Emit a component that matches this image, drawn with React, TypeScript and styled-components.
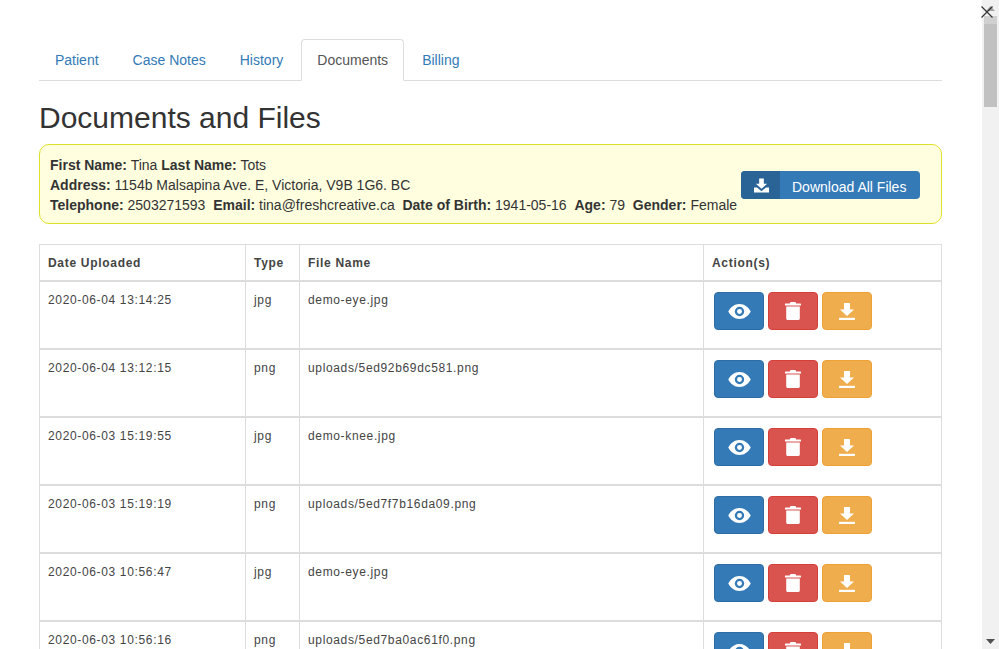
import React from 'react'
import styled, { createGlobalStyle } from 'styled-components'

const GlobalStyle = createGlobalStyle`
  html, body {
    margin: 0;
    height: 100%;
    overflow: hidden;
    background: #fff;
    font-family: "Liberation Sans", Arial, sans-serif;
    font-size: 14px;
    line-height: 20px;
    color: #333;
  }
  * { box-sizing: border-box; }
`

/*-- styled-component --*/
const Shell = styled.div`
  position: relative;
  display: flex;
  width: 999px;
  height: 649px;
  overflow: hidden;
`
const Content = styled.main`
  flex: 1;
  min-width: 0;
  padding: 39px 40px 0 39px;
  overflow: hidden;
`
const Tabs = styled.ul`
  display: flex;
  list-style: none;
  margin: 0;
  padding: 0;
  border-bottom: 1px solid #ddd;
`
const Tab = styled.li<{ $active?: boolean }>`
  margin: 0 2px -1px 0;
  padding: 10px 15px;
  height: 42px;
  border: 1px solid ${(p) => (p.$active ? '#ddd' : 'transparent')};
  border-bottom-color: ${(p) => (p.$active ? '#fff' : 'transparent')};
  border-radius: 4px 4px 0 0;
  background: ${(p) => (p.$active ? '#fff' : 'transparent')};
  color: ${(p) => (p.$active ? '#555' : '#337ab7')};
`
const Title = styled.h1`
  margin: 20px 0 10px;
  font-size: 30px;
  font-weight: 400;
  line-height: 33px;
  color: #333;
`
const InfoBox = styled.section`
  display: flex;
  align-items: flex-start;
  justify-content: space-between;
  height: 80px;
  margin-bottom: 20px;
  padding: 10px 21px 0 10px;
  background: #ffffdf;
  border: 1px solid #e0e02a;
  border-radius: 10px;
`
const InfoLine = styled.div`
  white-space: nowrap;
  b { font-weight: 700; }
`
const DownloadAll = styled.button`
  display: flex;
  align-items: stretch;
  width: 179px;
  height: 28px;
  margin-top: 16px;
  padding: 0;
  overflow: hidden;
  background: #337ab7;
  border: 0;
  border-radius: 4px;
  color: #fff;
  font: inherit;
`
const DownloadAllIcon = styled.span`
  display: flex;
  align-items: center;
  justify-content: center;
  width: 39px;
  padding-left: 2px;
  background: #2a6496;
`
const DownloadAllLabel = styled.span`
  flex: 1;
  padding-left: 12px;
  line-height: 32px;
  text-align: left;
`
const Table = styled.table`
  width: 902px;
  border-collapse: collapse;
  table-layout: fixed;
  font-size: 12px;
  letter-spacing: 0.65px;
  color: #444;
  border: 1px solid #ddd;
`
const HeadCell = styled.th`
  padding: 8px 8px 7px;
  border: 1px solid #ddd;
  border-bottom: 2px solid #ddd;
  font-weight: 700;
  letter-spacing: 0.7px;
  text-align: left;
`
const Cell = styled.td`
  height: 68px;
  padding: 8px;
  border: 1px solid #ddd;
  border-bottom-width: 2px;
  vertical-align: top;
`
const Actions = styled.div`
  display: flex;
  gap: 4px;
  margin: 2px 0 0 2px;
`
const ActionButton = styled.button<{ $bg: string; $edge: string }>`
  display: flex;
  align-items: center;
  justify-content: center;
  width: 50px;
  height: 38px;
  padding: 0;
  background: ${(p) => p.$bg};
  border: 1px solid ${(p) => p.$edge};
  border-radius: 4px;
`
const ScrollBar = styled.aside`
  display: flex;
  flex-direction: column;
  align-items: center;
  width: 17px;
  flex: none;
  background: #f1f1f1;
`
const ArrowSlot = styled.div`
  display: flex;
  align-items: center;
  justify-content: center;
  height: 16px;
  flex: none;
`
const Thumb = styled.div`
  width: 13px;
  height: 91px;
  background: linear-gradient(#d0d0d0 0 8px, #c1c1c1 8px);
`
const Spacer = styled.div`
  flex: 1;
`
const CloseButton = styled.button`
  position: absolute;
  top: 6px;
  left: 981px;
  display: flex;
  width: 12px;
  height: 12px;
  padding: 0;
  background: none;
  border: 0;
`

/*-- icons --*/
const DownloadTrayIcon: React.FC = () => (
  <svg width="15" height="15" viewBox="0 0 16 15" fill="#fff">
    <path d="M5.500 0h5v5.500H14L8 11 2 5.500h3.500z" />
    <path d="M0 9.500h3.200L8 13.500l4.800-4H16V15H0z" />
  </svg>
)
const EyeIcon: React.FC = () => (
  <svg width="23" height="15" viewBox="0 0 24 16">
    <path fill="#fff" fillRule="evenodd" d="M12 0c5.400 0 9.600 3.400 12 8-2.400 4.600-6.600 8-12 8S2.400 12.600 0 8c2.400-4.600 6.600-8 12-8zm0 3a5 5 0 1 0 0 10 5 5 0 0 0 0-10z" />
    <circle cx="12" cy="8" r="2.600" fill="#fff" />
  </svg>
)
const TrashIcon: React.FC = () => (
  <svg width="16" height="18" viewBox="0 0 16 18" fill="#fff">
    <path d="M5.500 0h5l.7 1.400h4.300a.5.5 0 0 1 .5.500V3.500H0V1.900a.5.5 0 0 1 .5-.5h4.300z" />
    <path d="M1.200 4.500h13.600v12c0 .9-.6 1.500-1.500 1.500H2.700c-.9 0-1.500-.6-1.500-1.500z" />
  </svg>
)
const SaveIcon: React.FC = () => (
  <svg width="16" height="17" viewBox="0 0 16 17" fill="#fff">
    <path d="M5 0h6v6.500h4L8 13 1 6.500h4z" />
    <path d="M0 14.800h16V17H0z" />
  </svg>
)

/*-- variables --*/
const rows = [
  ['2020-06-04 13:14:25', 'jpg', 'demo-eye.jpg'],
  ['2020-06-04 13:12:15', 'png', 'uploads/5ed92b69dc581.png'],
  ['2020-06-03 15:19:55', 'jpg', 'demo-knee.jpg'],
  ['2020-06-03 15:19:19', 'png', 'uploads/5ed7f7b16da09.png'],
  ['2020-06-03 10:56:47', 'jpg', 'demo-eye.jpg'],
  ['2020-06-03 10:56:16', 'png', 'uploads/5ed7ba0ac61f0.png'],
]
const tabs = ['Patient', 'Case Notes', 'History', 'Documents', 'Billing']

/*-- element --*/
const App: React.FC = () => (
  <>
    <GlobalStyle />
    <Shell>
      <Content>
        <Tabs>
          {tabs.map((tab) => (
            <Tab key={tab} $active={tab === 'Documents'}>{tab}</Tab>
          ))}
        </Tabs>
        <Title>Documents and Files</Title>
        <InfoBox>
          <div>
            <InfoLine><b>First Name:</b> Tina <b>Last Name:</b> Tots</InfoLine>
            <InfoLine><b>Address:</b> 1154b Malsapina Ave. E, Victoria, V9B 1G6. BC</InfoLine>
            <InfoLine>
              <b>Telephone:</b> 2503271593&nbsp; <b>Email:</b> tina@freshcreative.ca&nbsp; <b>Date of Birth:</b> 1941-05-16&nbsp; <b>Age:</b> 79&nbsp; <b>Gender:</b> Female
            </InfoLine>
          </div>
          <DownloadAll type="button">
            <DownloadAllIcon><DownloadTrayIcon /></DownloadAllIcon>
            <DownloadAllLabel>Download All Files</DownloadAllLabel>
          </DownloadAll>
        </InfoBox>
        <Table>
          <colgroup>
            <col width="206" />
            <col width="54" />
            <col width="404" />
            <col width="238" />
          </colgroup>
          <thead>
            <tr>
              <HeadCell>Date Uploaded</HeadCell>
              <HeadCell>Type</HeadCell>
              <HeadCell>File Name</HeadCell>
              <HeadCell>Action(s)</HeadCell>
            </tr>
          </thead>
          <tbody>
            {rows.map(([date, type, name]) => (
              <tr key={date}>
                <Cell>{date}</Cell>
                <Cell>{type}</Cell>
                <Cell>{name}</Cell>
                <Cell>
                  <Actions>
                    <ActionButton type="button" $bg="#337ab7" $edge="#2e6da4"><EyeIcon /></ActionButton>
                    <ActionButton type="button" $bg="#d9534f" $edge="#d43f3a"><TrashIcon /></ActionButton>
                    <ActionButton type="button" $bg="#f0ad4e" $edge="#eea236"><SaveIcon /></ActionButton>
                  </Actions>
                </Cell>
              </tr>
            ))}
          </tbody>
        </Table>
      </Content>
      <ScrollBar>
        <ArrowSlot>
          <svg width="9" height="5" viewBox="0 0 9 5"><path d="M4.500 0L9 5H0z" fill="#a3a3a3" /></svg>
        </ArrowSlot>
        <Thumb />
        <Spacer />
        <ArrowSlot>
          <svg width="9" height="5" viewBox="0 0 9 5"><path d="M0 0h9L4.500 5z" fill="#505050" /></svg>
        </ArrowSlot>
      </ScrollBar>
      <CloseButton type="button" aria-label="Close">
        <svg width="12" height="12" viewBox="0 0 12 12">
          <path d="M.5.500l11 11M11.500.500l-11 11" stroke="#333" strokeWidth="1.200" fill="none" />
        </svg>
      </CloseButton>
    </Shell>
  </>
)

export default App
